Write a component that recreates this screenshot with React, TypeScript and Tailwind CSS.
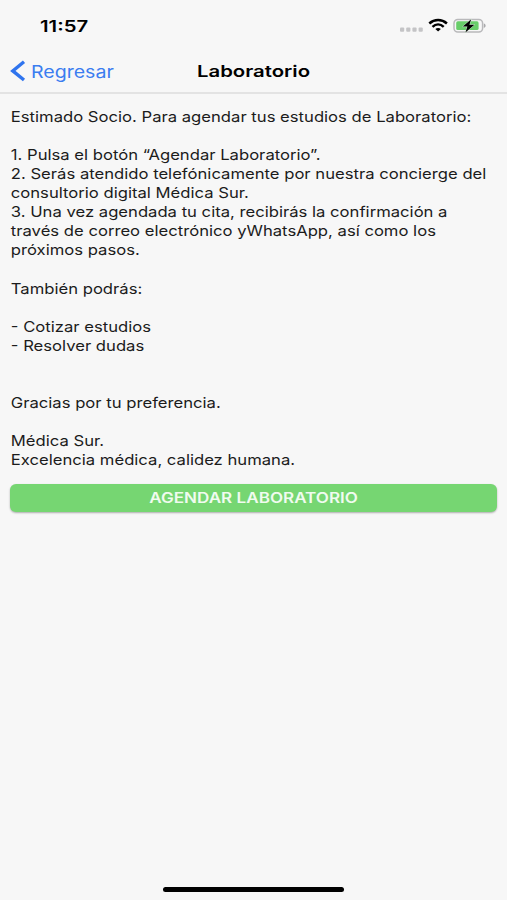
const LINES = [
  'Estimado Socio. Para agendar tus estudios de Laboratorio:',
  '',
  '1. Pulsa el botón “Agendar Laboratorio”.',
  '2. Serás atendido telefónicamente por nuestra concierge del',
  'consultorio digital Médica Sur.',
  '3. Una vez agendada tu cita, recibirás la confirmación a',
  'través de correo electrónico yWhatsApp, así como los',
  'próximos pasos.',
  '',
  'También podrás:',
  '',
  '- Cotizar estudios',
  '- Resolver dudas',
  '',
  '',
  'Gracias por tu preferencia.',
  '',
  'Médica Sur.',
  'Excelencia médica, calidez humana.'
]

function StatusIcons() {
  return (
    <svg width="88" height="18" viewBox="0 0 88 18" aria-hidden="true">
      <g fill="#c4c4c6">
        <rect x="0" y="10.6" width="4.2" height="4.2" rx="1" />
        <rect x="6.2" y="10.6" width="4.2" height="4.2" rx="1" />
        <rect x="12.4" y="10.6" width="4.2" height="4.2" rx="1" />
        <rect x="18.6" y="10.6" width="4.2" height="4.2" rx="1" />
      </g>
      <g fill="none" stroke="#000" strokeWidth="2.5">
        <path d="M29.3 6.5C34.5 1.9 41.7 1.9 46.9 6.5" />
        <path d="M32.5 9.8C35.8 6.8 40.4 6.8 43.7 9.8" />
      </g>
      <path d="M35.3 12C37 10.6 39.2 10.6 40.9 12L38.1 14.5Z" fill="#000" />
      <rect x="54" y="2.4" width="28.6" height="12.6" rx="3.8" fill="none" stroke="#b9b9bb" strokeWidth="1.5" />
      <rect x="56.2" y="4.3" width="22.4" height="8.8" rx="1.6" fill="#68ce6a" />
      <path d="M83.8 6.5C86.2 7.1 86.2 10.3 83.8 10.9Z" fill="#aaaaac" />
      <path d="M71.2 2.2L62.8 9.6H67.4L65.4 15.4L74.4 7.7H69.4Z" fill="#000" stroke="#d9f0d9" strokeWidth="1" paintOrder="stroke" />
    </svg>
  )
}

export default function App() {
  return (
    <div className="flex h-[900px] w-[507px] flex-col overflow-hidden bg-[#f7f7f7] font-['Inter',sans-serif] text-black">
      <div className="flex h-[50px] items-center justify-between pt-[2px] pr-[19px] pl-[40px]">
        <span className="origin-left scale-x-[1.27] text-[16px] font-semibold">11:57</span>
        <StatusIcons />
      </div>

      <header className="grid h-[44px] grid-cols-[1fr_auto_1fr] items-center border-b-2 border-[#e3e3e3]">
        <button className="flex items-center pl-[10px] text-[#3b7df0]">
          <svg width="16" height="22" viewBox="0 0 16 22" fill="none" stroke="#2f74ee" strokeWidth="3.4">
            <path d="M14 1.8L2.8 10.9L14 20" />
          </svg>
          <span className="mt-[3px] ml-[4.5px] origin-left scale-x-[1.15] text-[17px]">Regresar</span>
        </button>
        <h1 className="scale-x-[1.27] text-[16px] font-semibold">Laboratorio</h1>
      </header>

      <main className="px-[10px] pt-[13px]">
        <div className="origin-left scale-x-[1.148] pl-[0.7px] text-[14.5px] leading-[19.07px] whitespace-nowrap text-[#1c1c1c]">
          {LINES.map((line, i) => (
            <p key={i} className="h-[19.07px]">{line}</p>
          ))}
        </div>
        <button className="mt-[15px] flex h-[28px] w-full items-center justify-center rounded-[6px] bg-[#76d672] pb-px shadow-[0_1px_2px_rgba(0,0,0,0.3)]">
          <span className="scale-x-[1.22] text-[14px] font-semibold text-[#f0fbef]">AGENDAR LABORATORIO</span>
        </button>
      </main>

      <div className="mt-auto mb-[8px] h-[5px] w-[181px] self-center rounded-full bg-black" />
    </div>
  )
}
